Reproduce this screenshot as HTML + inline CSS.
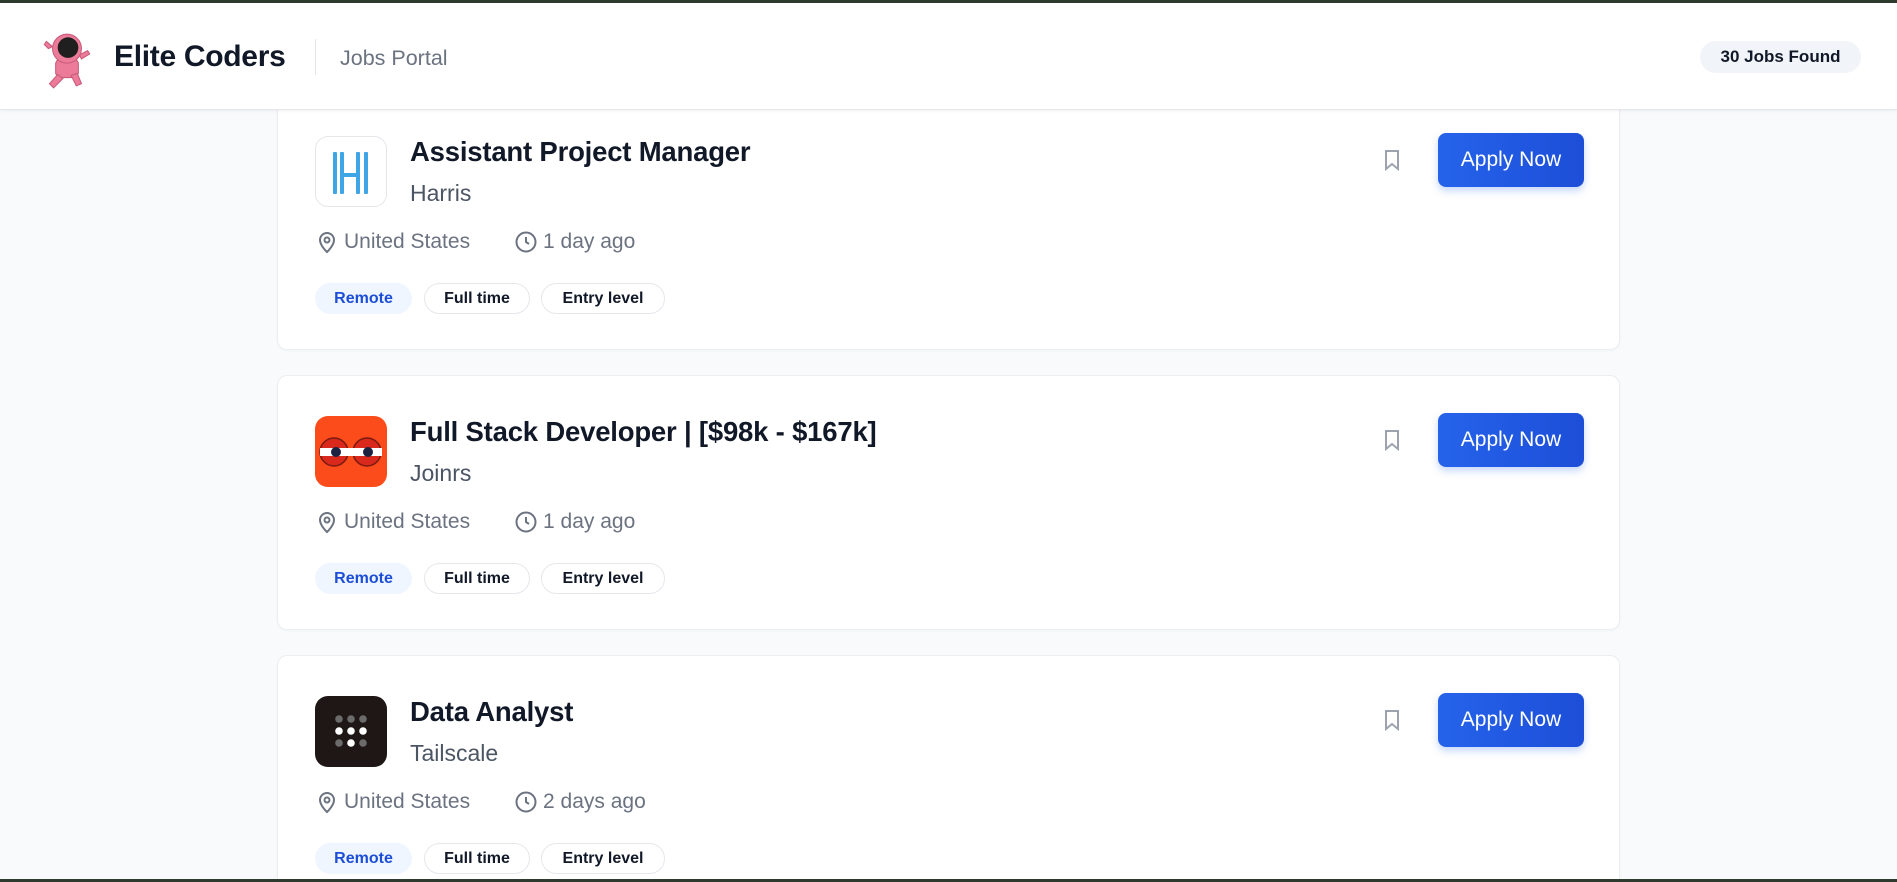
<!DOCTYPE html>
<html><head><meta charset="utf-8">
<style>
*{margin:0;padding:0;box-sizing:border-box}
html,body{width:1897px;height:882px;overflow:hidden}
body{background:#f9fafb;font-family:"Liberation Sans",sans-serif;position:relative;color:#111827}
.topline{position:absolute;left:0;top:0;width:1897px;height:3px;background:#2f3a2f}
.botline{position:absolute;left:0;top:879px;width:1897px;height:3px;background:#2f3a2f}
header{position:absolute;left:0;top:3px;width:1897px;height:107px;background:#fff;border-bottom:1px solid #e5e7eb;box-shadow:0 1px 3px rgba(0,0,0,.06);z-index:5}
.brand{position:absolute;left:114px;top:37px;font-size:30px;font-weight:700;color:#111827;letter-spacing:-0.3px}
.div{position:absolute;left:315px;top:36px;width:1px;height:36px;background:#e5e7eb}
.portal{position:absolute;left:340px;top:43px;font-size:21.5px;color:#6b7280}
.badge{position:absolute;left:1700px;top:38px;width:161px;height:32px;border-radius:16px;background:#f1f4f8;font-size:17px;font-weight:700;color:#111827;text-align:center;line-height:32px}
.card{position:absolute;left:277px;width:1343px;height:255px;background:#fff;border:1px solid #eceef1;border-radius:10px;box-shadow:0 1px 2px rgba(0,0,0,.03)}
.logo{position:absolute;left:37px;top:40px;width:72px;height:71px;border-radius:13px;overflow:hidden}
.title{position:absolute;left:132px;top:40px;font-size:27.5px;font-weight:700;color:#111827;letter-spacing:-0.2px}
.comp{position:absolute;left:132px;top:84px;font-size:23px;color:#4b5563}
.meta{position:absolute;top:134px;font-size:21px;color:#6b7280;display:flex;align-items:center}
.meta svg{margin-right:5px}
.tag{position:absolute;top:187px;height:31px;border-radius:16px;font-size:16px;font-weight:700;line-height:29px;text-align:center;border:1px solid #e5e7eb;color:#111827}
.tag.r{background:#eff6ff;border-color:#eff6ff;color:#1d4ed8}
.apply{position:absolute;left:1160px;top:37px;width:146px;height:54px;border-radius:8px;background:linear-gradient(90deg,#2563eb,#1d4ed8);color:#fff;font-size:21px;font-weight:500;text-align:center;line-height:54px;box-shadow:0 4px 8px rgba(37,99,235,.25)}
.bm{position:absolute;left:1104px;top:53px}
</style></head><body>
<div class="topline"></div>
<header>
<svg style="position:absolute;left:42px;top:25px" width="50" height="64" viewBox="0 0 48 62">
<g fill="#ec7b9a" stroke="#c85a7a" stroke-width="1">
<path d="M6 20 L2 16 L4 13 L10 18 Z"/>
<path d="M36 26 L44 22 L46 25 L38 30 Z"/>
<rect x="13" y="30" width="22" height="18" rx="5"/>
<path d="M15 45 L7 54 L11 58 L20 49 Z"/>
<path d="M28 46 L33 56 L38 54 L34 44 Z"/>
<circle cx="24" cy="20" r="14"/>
</g>
<circle cx="25" cy="19" r="10" fill="#1f1f1f"/>
</svg>
<div class="brand">Elite Coders</div>
<div class="div"></div>
<div class="portal">Jobs Portal</div>
<div class="badge">30 Jobs Found</div>
</header>

<!-- card 1 -->
<div class="card" style="top:95px">
<div class="logo" style="border:1px solid #e5e7eb;background:#fff">
<svg width="72" height="71" viewBox="0 0 72 71"><g fill="#3ea6e6"><rect x="17" y="15" width="4" height="42" rx="1"/><rect x="24" y="15" width="4" height="42" rx="1"/><rect x="40" y="15" width="4" height="42" rx="1"/><rect x="48" y="15" width="4" height="42" rx="1"/><rect x="24" y="36" width="20" height="4"/></g></svg>
</div>
<div class="title">Assistant Project Manager</div>
<div class="comp">Harris</div>
<div class="meta" style="left:37px"><svg width="24" height="24" viewBox="0 0 24 24" fill="none" stroke="#6b7280" stroke-width="2"><path d="M12 22s7-6.5 7-12a7 7 0 0 0-14 0c0 5.5 7 12 7 12z"/><circle cx="12" cy="10" r="2.5"/></svg>United States</div>
<div class="meta" style="left:236px"><svg width="24" height="24" viewBox="0 0 24 24" fill="none" stroke="#6b7280" stroke-width="2"><circle cx="12" cy="12" r="9.5"/><path d="M12 7v5l3 2"/></svg>1 day ago</div>
<div class="tag r" style="left:37px;width:97px">Remote</div>
<div class="tag" style="left:146px;width:106px">Full time</div>
<div class="tag" style="left:263px;width:124px">Entry level</div>
<svg class="bm" width="20" height="22" viewBox="0 0 20 22" fill="none" stroke="#9ca3af" stroke-width="2"><path d="M4 2h12v18l-6-5-6 5z"/></svg>
<div class="apply">Apply Now</div>
</div>

<!-- card 2 -->
<div class="card" style="top:375px">
<div class="logo" style="background:#fc4c1c">
<svg width="72" height="71" viewBox="0 0 72 71"><g stroke="#7a1a10" stroke-width="1.5"><circle cx="19" cy="36" r="14" fill="#d9281c"/><circle cx="52" cy="36" r="14" fill="#d9281c"/></g><rect x="5" y="32" width="62" height="8" fill="#fff"/><circle cx="21" cy="36" r="5" fill="#1c2340"/><circle cx="53" cy="36" r="5" fill="#1c2340"/></svg>
</div>
<div class="title">Full Stack Developer | [$98k - $167k]</div>
<div class="comp">Joinrs</div>
<div class="meta" style="left:37px"><svg width="24" height="24" viewBox="0 0 24 24" fill="none" stroke="#6b7280" stroke-width="2"><path d="M12 22s7-6.5 7-12a7 7 0 0 0-14 0c0 5.5 7 12 7 12z"/><circle cx="12" cy="10" r="2.5"/></svg>United States</div>
<div class="meta" style="left:236px"><svg width="24" height="24" viewBox="0 0 24 24" fill="none" stroke="#6b7280" stroke-width="2"><circle cx="12" cy="12" r="9.5"/><path d="M12 7v5l3 2"/></svg>1 day ago</div>
<div class="tag r" style="left:37px;width:97px">Remote</div>
<div class="tag" style="left:146px;width:106px">Full time</div>
<div class="tag" style="left:263px;width:124px">Entry level</div>
<svg class="bm" width="20" height="22" viewBox="0 0 20 22" fill="none" stroke="#9ca3af" stroke-width="2"><path d="M4 2h12v18l-6-5-6 5z"/></svg>
<div class="apply">Apply Now</div>
</div>

<!-- card 3 -->
<div class="card" style="top:655px">
<div class="logo" style="background:#1f1715">
<svg width="72" height="71" viewBox="0 0 72 71"><g fill="#6b6b6b"><circle cx="24" cy="23" r="3.8"/><circle cx="36" cy="23" r="3.8"/><circle cx="48" cy="23" r="3.8"/><circle cx="24" cy="47" r="3.8"/><circle cx="48" cy="47" r="3.8"/></g><g fill="#fff"><circle cx="24" cy="35" r="3.8"/><circle cx="36" cy="35" r="3.8"/><circle cx="48" cy="35" r="3.8"/><circle cx="36" cy="47" r="3.8"/></g></svg>
</div>
<div class="title">Data Analyst</div>
<div class="comp">Tailscale</div>
<div class="meta" style="left:37px"><svg width="24" height="24" viewBox="0 0 24 24" fill="none" stroke="#6b7280" stroke-width="2"><path d="M12 22s7-6.5 7-12a7 7 0 0 0-14 0c0 5.5 7 12 7 12z"/><circle cx="12" cy="10" r="2.5"/></svg>United States</div>
<div class="meta" style="left:236px"><svg width="24" height="24" viewBox="0 0 24 24" fill="none" stroke="#6b7280" stroke-width="2"><circle cx="12" cy="12" r="9.5"/><path d="M12 7v5l3 2"/></svg>2 days ago</div>
<div class="tag r" style="left:37px;width:97px">Remote</div>
<div class="tag" style="left:146px;width:106px">Full time</div>
<div class="tag" style="left:263px;width:124px">Entry level</div>
<svg class="bm" width="20" height="22" viewBox="0 0 20 22" fill="none" stroke="#9ca3af" stroke-width="2"><path d="M4 2h12v18l-6-5-6 5z"/></svg>
<div class="apply">Apply Now</div>
</div>
<div class="botline"></div>
</body></html>
